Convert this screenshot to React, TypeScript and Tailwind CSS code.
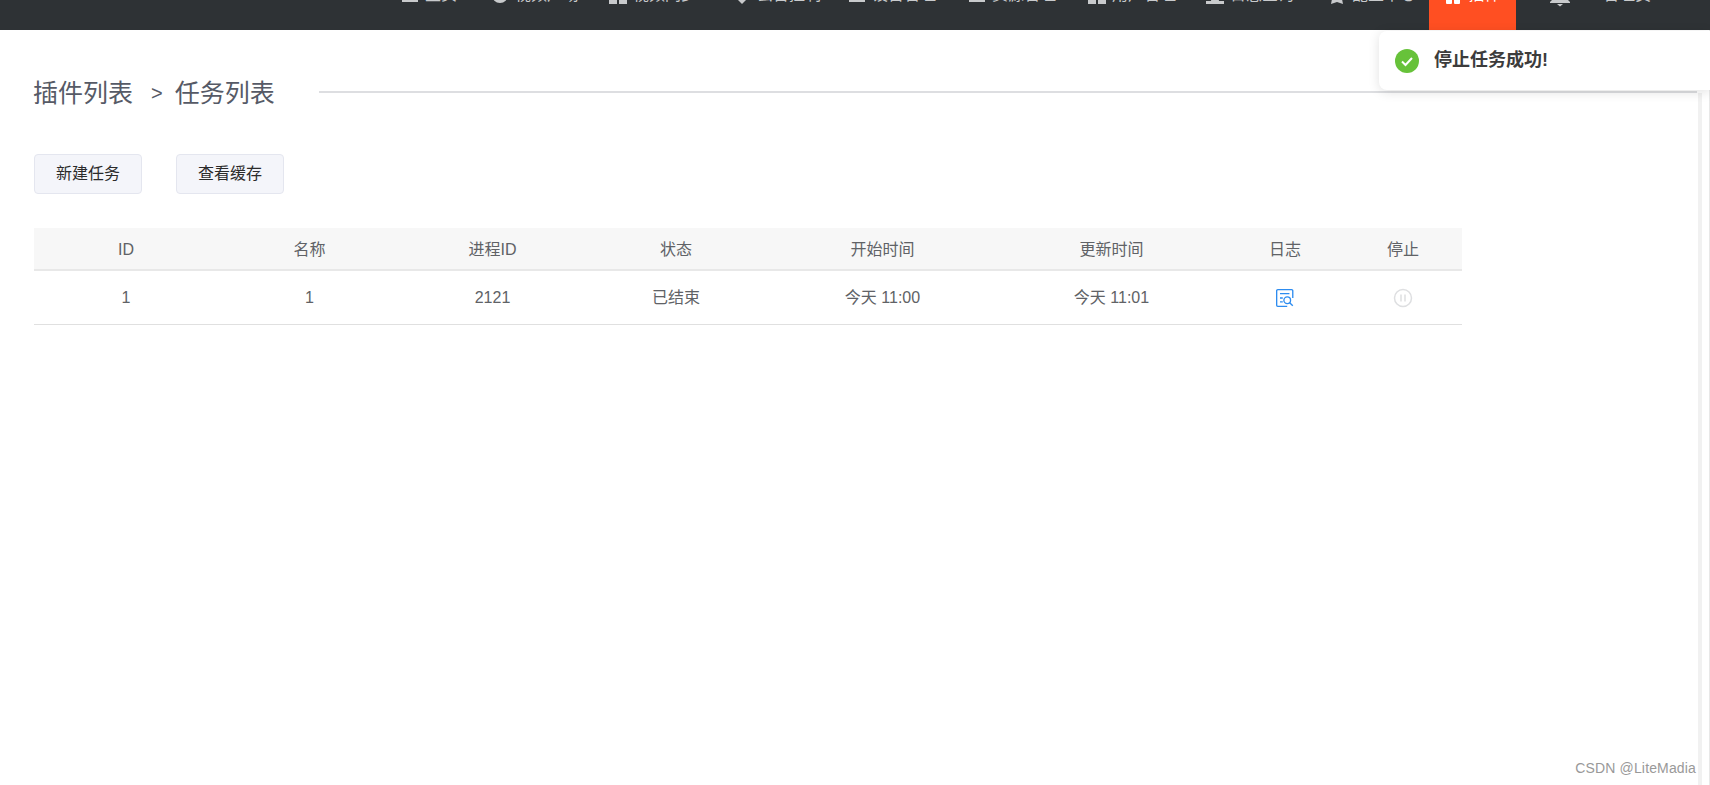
type NavItem = {
  label: string;
  width: string;
  icon: string;
};

const navItems: NavItem[] = [
  { label: '主页', width: 'w-[90px]', icon: 'bar' },
  { label: '视频广场', width: 'w-[118px]', icon: 'circle' },
  { label: '视频同步', width: 'w-[124px]', icon: 'grid' },
  { label: '云台控制', width: 'w-[115px]', icon: 'pin' },
  { label: '设备管理', width: 'w-[120px]', icon: 'bar' },
  { label: '资源管理', width: 'w-[120px]', icon: 'bar' },
  { label: '用户管理', width: 'w-[118px]', icon: 'grid' },
  { label: '日志查询', width: 'w-[122px]', icon: 'stand' },
  { label: '配置中心', width: 'w-[101px]', icon: 'star' },
];

const columns = [
  { title: 'ID', value: '1', width: 'w-[184px]' },
  { title: '名称', value: '1', width: 'w-[183px]' },
  { title: '进程ID', value: '2121', width: 'w-[183px]' },
  { title: '状态', value: '已结束', width: 'w-[184px]' },
  { title: '开始时间', value: '今天 11:00', width: 'w-[229px]' },
  { title: '更新时间', value: '今天 11:01', width: 'w-[229px]' },
];

const NavIcon = ({ name, color = '#c8cacc' }: { name: string; color?: string }) => {
  return (
    <svg width="18" height="18" viewBox="0 0 18 18" fill={color} className="shrink-0">
      {name === 'bar' && <rect x="1" y="0" width="16" height="16" />}
      {name === 'circle' && <circle cx="9" cy="9" r="8" />}
      {name === 'grid' && (
        <>
          <rect x="0" y="9" width="8" height="9" />
          <rect x="10" y="9" width="8" height="9" />
        </>
      )}
      {name === 'pin' && <path d="M3 12H15L9 18Z" />}
      {name === 'stand' && <path d="M6 10H12L13 15H18V18H0V15H5Z" />}
      {name === 'star' && <path d="M4 13H14L15 18L9 16L3 18Z" />}
      {name === 'gift' && (
        <>
          <rect x="2" y="10" width="6" height="8" rx="1" />
          <rect x="10" y="10" width="6" height="8" rx="1" />
        </>
      )}
    </svg>
  );
};

const App = () => {
  return (
    <div className="relative h-[785px] w-[1710px] overflow-hidden bg-white font-['Liberation_Sans','Noto_Sans_CJK_SC',sans-serif] text-[#606266]">
      <header className="flex h-[30px] items-start overflow-hidden bg-[#2e3235] pl-[401px] text-[16px] text-[#c8cacc]">
        {navItems.map((item) => (
          <div key={item.label} className={`${item.width} -mt-[15px] flex h-5 items-center gap-[6px]`}>
            <NavIcon name={item.icon} />
            <span className="whitespace-nowrap">{item.label}</span>
          </div>
        ))}
        <div className="flex h-[30px] w-[87px] justify-center bg-[#ff4f22] text-white">
          <span className="-mt-[15px] flex h-5 items-center gap-[6px] whitespace-nowrap">
            <NavIcon name="gift" color="#ffffff" />
            插件
          </span>
        </div>
        <div className="ml-[33px] -mt-[10px] w-[54px]">
          <svg width="22" height="17" viewBox="0 0 22 17" fill="#c8cacc">
            <path d="M5 0H17V8L21 12V13H1V12L5 8Z" />
            <path d="M8 14H14L11 16.5Z" />
          </svg>
        </div>
        <span className="-mt-[15px] flex h-5 items-center whitespace-nowrap">管理员</span>
      </header>

      <main className="pl-[34px] pr-[13px] pt-[46px]">
        <div className="flex items-center text-[#565a66]">
          <h1 className="-ml-px whitespace-nowrap text-[25px] leading-[34px]">插件列表</h1>
          <span className="ml-[18px] text-[20px] leading-[34px]">&gt;</span>
          <h1 className="ml-[12px] whitespace-nowrap text-[25px] leading-[34px]">任务列表</h1>
          <div className="ml-[44px] -mt-0.5 h-0.5 flex-1 bg-[#dddee1]" />
        </div>

        <div className="mt-[44px] flex gap-[34px]">
          <button className="h-10 w-[108px] rounded border border-[#e4e6ef] bg-[#f4f5fa] text-[16px] text-[#2b2b2b]">新建任务</button>
          <button className="h-10 w-[108px] rounded border border-[#e4e6ef] bg-[#f4f5fa] text-[16px] text-[#2b2b2b]">查看缓存</button>
        </div>

        <div className="mt-[34px] w-[1428px] text-[16px]">
          <div className="flex h-[43px] items-center border-b-2 border-[#e8e8e8] bg-[#f7f7f7] pt-[3px]">
            {columns.map((col) => (
              <div key={col.title} className={`${col.width} text-center`}>{col.title}</div>
            ))}
            <div className="w-[118px] text-center">日志</div>
            <div className="w-[118px] text-center">停止</div>
          </div>
          <div className="flex h-[54px] items-center border-b border-[#e0e0e0]">
            {columns.map((col) => (
              <div key={col.title} className={`${col.width} text-center`}>{col.value}</div>
            ))}
            <div className="flex w-[118px] justify-center">
              <svg width="20" height="20" viewBox="0 0 18 18" fill="none" stroke="#2d8cf0" strokeWidth="1.2">
                <path d="M16 9V2.5A1 1 0 0 0 15 1.5H2.5A1 1 0 0 0 1.5 2.5V15.5A1 1 0 0 0 2.5 16.5H11" />
                <path d="M4.5 5H13M4.5 9H7M4.5 12.5H7" />
                <circle cx="11" cy="11" r="3" />
                <path d="M13.2 13.2L16 16" />
              </svg>
            </div>
            <div className="flex w-[118px] justify-center">
              <svg width="20" height="20" viewBox="0 0 20 20" fill="none" stroke="#dedfe1">
                <circle cx="10" cy="10" r="8.5" strokeWidth="1.5" />
                <path d="M8 6.5V13.5M12 6.5V13.5" strokeWidth="1.5" />
              </svg>
            </div>
          </div>
        </div>
      </main>

      <div className="absolute bottom-0 right-[8px] top-[93px] w-[4px] bg-[#f1f1f1]" />
      <div className="absolute bottom-0 right-0 top-[30px] w-px bg-[#e8e8e8]" />

      <div className="absolute left-[1379px] top-[31px] flex h-[59px] w-[331px] items-center gap-[15px] rounded-l-lg bg-white pl-[16px] shadow-[0_2px_12px_rgba(0,0,0,0.12)]">
        <svg width="24" height="24" viewBox="0 0 24 24">
          <circle cx="12" cy="12" r="12" fill="#67c23a" />
          <path d="M7 12.5L10.5 16L17 9" fill="none" stroke="#fff" strokeWidth="2" />
        </svg>
        <span className="text-[18px] font-bold text-[#3c3c3c]">停止任务成功!</span>
      </div>

      <div className="absolute bottom-[7px] right-[14px] text-[14px] leading-5 tracking-[0.15px] text-[#999]">CSDN @LiteMadia</div>
    </div>
  );
};

export default App;
